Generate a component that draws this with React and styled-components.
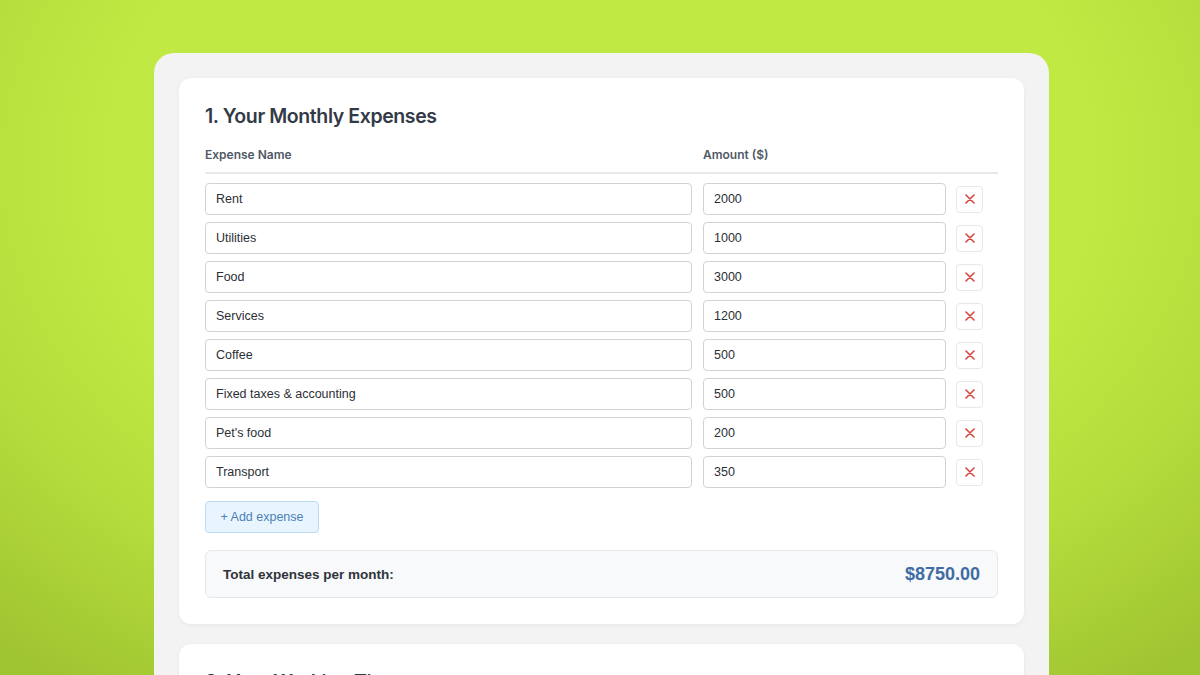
import styled, { createGlobalStyle } from 'styled-components';

const GlobalStyle = createGlobalStyle`
    html, body {
        margin: 0;
        padding: 0;
        height: 675px;
        overflow: hidden;
    }
    body {
        font-family: 'Inter', 'Liberation Sans', sans-serif;
        background: #bfe842;
    }
`;

const expenses = [
    { name: 'Rent', amount: 2000 },
    { name: 'Utilities', amount: 1000 },
    { name: 'Food', amount: 3000 },
    { name: 'Services', amount: 1200 },
    { name: 'Coffee', amount: 500 },
    { name: 'Fixed taxes & accounting', amount: 500 },
    { name: "Pet's food", amount: 200 },
    { name: 'Transport', amount: 350 },
];

export default function App () {

    const total = expenses.reduce((sum, e) => sum + e.amount, 0);

    return (
        <>
            <GlobalStyle />
            <Stage>
                <Panel>
                    <Card>
                        <CardTitle>1. Your Monthly Expenses</CardTitle>
                        <HeaderRow>
                            <HeaderLabel>Expense Name</HeaderLabel>
                            <HeaderLabel>Amount ($)</HeaderLabel>
                            <span />
                        </HeaderRow>
                        <Rows>
                            {expenses.map((e) => (
                                <ExpenseRow key={e.name}>
                                    <Field defaultValue={e.name} />
                                    <Field defaultValue={e.amount} />
                                    <DeleteButton aria-label="Remove">
                                        <svg width="10" height="10" viewBox="0 0 10 10">
                                            <path d="M1 1 L9 9 M9 1 L1 9" stroke="#d8433c" strokeWidth="1.6" strokeLinecap="round" />
                                        </svg>
                                    </DeleteButton>
                                </ExpenseRow>
                            ))}
                        </Rows>
                        <AddButton>+ Add expense</AddButton>
                        <TotalBox>
                            <TotalLabel>Total expenses per month:</TotalLabel>
                            <TotalValue>${total.toFixed(2)}</TotalValue>
                        </TotalBox>
                    </Card>
                    <Card>
                        <CardTitle>2. Your Working Time</CardTitle>
                    </Card>
                </Panel>
            </Stage>
        </>
    );

}

const Stage = styled.div`
    height: 675px;
    padding-top: 53px;
    box-sizing: border-box;
    display: flex;
    justify-content: center;
    background: radial-gradient(ellipse 75% 95% at 50% 25%, #c0e943 55%, #b4dc3c 75%, #9fc431 100%);
    overflow: hidden;
`;

const Panel = styled.div`
    width: 895px;
    margin-left: 3px;
    background: #f3f3f4;
    border-radius: 20px 20px 0 0;
    padding: 25px;
    box-sizing: border-box;
    display: flex;
    flex-direction: column;
    gap: 20px;
`;

const Card = styled.div`
    background: #ffffff;
    border-radius: 12px;
    box-shadow: 0 1px 4px rgba(0, 0, 0, 0.06);
    padding: 25px 26px 26px;
    flex-shrink: 0;
`;

const CardTitle = styled.h2`
    margin: 0 0 18px;
    font-size: 19.5px;
    line-height: 26px;
    font-weight: 600;
    color: #333a47;
    letter-spacing: -0.4px;
`;

const HeaderRow = styled.div`
    display: grid;
    grid-template-columns: 487px 243px 1fr;
    column-gap: 11px;
    padding-bottom: 9px;
    border-bottom: 2px solid #e6e8eb;
`;

const HeaderLabel = styled.div`
    font-size: 12px;
    line-height: 16px;
    font-weight: 600;
    color: #505866;
`;

const Rows = styled.div`
    margin-top: 9px;
    display: flex;
    flex-direction: column;
    gap: 7px;
`;

const ExpenseRow = styled.div`
    display: grid;
    grid-template-columns: 487px 243px 27px;
    column-gap: 11px;
    align-items: center;
`;

const Field = styled.input`
    height: 32px;
    box-sizing: border-box;
    border: 1px solid #cfd3d8;
    border-radius: 4px;
    padding: 0 10px;
    font-family: 'Liberation Sans', Arial, sans-serif;
    font-size: 12.5px;
    color: #2b2f36;
    background: #fff;
    outline: none;
`;

const DeleteButton = styled.button`
    width: 27px;
    height: 27px;
    margin-left: -1px;
    padding: 0;
    display: flex;
    align-items: center;
    justify-content: center;
    background: #fff;
    border: 1px solid #e6e8eb;
    border-radius: 4px;
    cursor: pointer;
`;

const AddButton = styled.button`
    margin-top: 13px;
    height: 32px;
    width: 114px;
    padding: 0;
    background: #e9f5fe;
    border: 1px solid #b9dcf3;
    border-radius: 4px;
    color: #4c80b8;
    font-family: 'Liberation Sans', Arial, sans-serif;
    font-size: 12.5px;
    cursor: pointer;
`;

const TotalBox = styled.div`
    margin-top: 17px;
    height: 48px;
    box-sizing: border-box;
    display: flex;
    align-items: center;
    justify-content: space-between;
    padding: 0 17px;
    background: #f7f9fb;
    border: 1px solid #e5e8ec;
    border-radius: 6px;
`;

const TotalLabel = styled.div`
    font-family: 'Liberation Sans', Arial, sans-serif;
    font-size: 13.5px;
    font-weight: 700;
    color: #2f333a;
`;

const TotalValue = styled.div`
    font-family: 'Liberation Sans', Arial, sans-serif;
    font-size: 18px;
    font-weight: 700;
    color: #3f6ca3;
`;
